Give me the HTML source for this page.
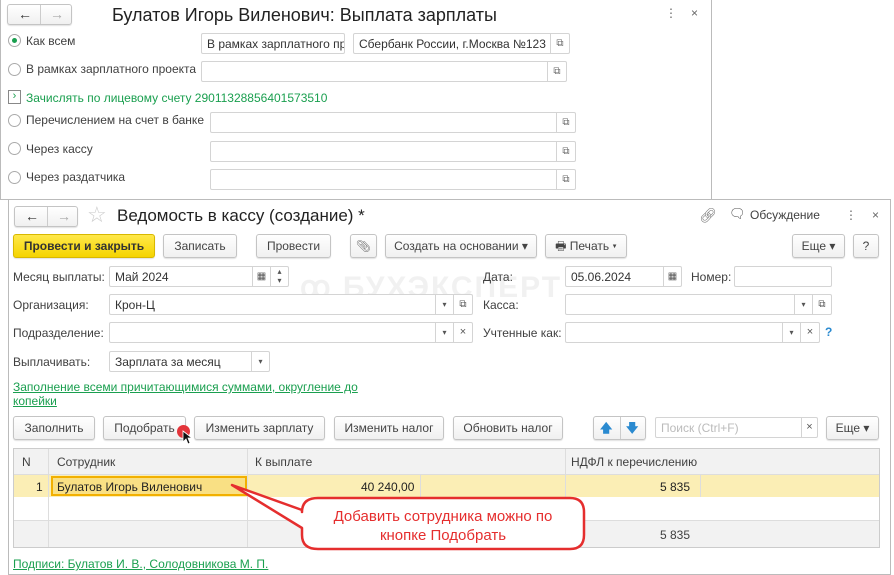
<!DOCTYPE html>
<html><head><meta charset="utf-8"><style>
*{box-sizing:border-box;margin:0;padding:0}
body{width:894px;height:575px;background:#fff;font-family:"Liberation Sans",sans-serif;font-size:12px;color:#404040;position:relative;overflow:hidden}
.a{position:absolute}
.f{position:absolute;border:1px solid #d4d4d4;border-radius:2px;background:#fff;height:21px;padding:3px 5px;white-space:nowrap;overflow:hidden;color:#333}
.b{position:absolute;border:1px solid #c4c4c4;border-radius:3px;background:linear-gradient(#fff,#f0f0f0);height:24px;text-align:center;line-height:22px;color:#444;box-shadow:0 1px 1px rgba(0,0,0,.12)}
.r{position:absolute;width:13px;height:13px;border:1px solid #aaa;border-radius:50%;background:#fff}
.cp{position:absolute;width:19px;height:21px;border-left:1px solid #d4d4d4;font-size:10px;color:#666;text-align:center;line-height:19px}
.dd{position:absolute;font-size:8px;color:#555;text-align:center;line-height:19px;border-left:1px solid #d4d4d4;width:18px;height:19px;top:0}
.l{position:absolute;white-space:nowrap}
.g{color:#1a9f4f}
.nav{position:absolute;font-size:14px;font-weight:bold;line-height:18px}
</style></head><body>
<!-- back window -->
<div class="a" style="left:0;top:0;width:712px;height:200px;border:1px solid #bbb;border-top:none"></div>
<div class="b" style="left:7px;top:4px;width:65px;height:21px;line-height:19px"><span class="nav" style="left:10px;color:#333">←</span><span style="position:absolute;left:32px;top:0;height:19px;border-left:1px solid #ccc"></span><span class="nav" style="left:42px;color:#aaa">→</span></div>
<div class="l" style="left:112px;top:5px;font-size:18px;color:#222">Булатов Игорь Виленович: Выплата зарплаты</div>
<div class="l" style="left:665px;top:6px;color:#666">⋮</div><div class="l" style="left:691px;top:6px;color:#666">×</div>
<div class="r" style="left:8px;top:34px"><div style="width:5px;height:5px;background:#1a9f4f;border-radius:50%;margin:3px"></div></div>
<div class="l" style="left:26px;top:34px">Как всем</div>
<div class="f" style="left:201px;top:33px;width:144px">В рамках зарплатного про</div>
<div class="f" style="left:353px;top:33px;width:217px">Сбербанк России, г.Москва №123<div class="cp" style="right:0;top:0">⧉</div></div>
<div class="r" style="left:8px;top:63px"></div><div class="l" style="left:26px;top:62px">В рамках зарплатного проекта</div>
<div class="f" style="left:201px;top:61px;width:366px"><div class="cp" style="right:0;top:0">⧉</div></div>
<div class="a" style="left:8px;top:90px;width:13px;height:14px;border:1px solid #888;color:#1a9f4f;font-size:11px;line-height:11px;text-align:center">›</div>
<div class="l g" style="left:26px;top:91px">Зачислять по лицевому счету 29011328856401573510</div>
<div class="r" style="left:8px;top:114px"></div><div class="l" style="left:26px;top:113px">Перечислением на счет в банке</div>
<div class="f" style="left:210px;top:112px;width:366px"><div class="cp" style="right:0;top:0">⧉</div></div>
<div class="r" style="left:8px;top:142px"></div><div class="l" style="left:26px;top:142px">Через кассу</div>
<div class="f" style="left:210px;top:141px;width:366px"><div class="cp" style="right:0;top:0">⧉</div></div>
<div class="r" style="left:8px;top:171px"></div><div class="l" style="left:26px;top:170px">Через раздатчика</div>
<div class="f" style="left:210px;top:169px;width:366px"><div class="cp" style="right:0;top:0">⧉</div></div>

<!-- front window -->
<div class="a" style="left:8px;top:199px;width:883px;height:376px;border:1px solid #bbb;background:#fff"></div>
<div class="l" style="left:300px;top:270px;font-size:30px;font-weight:bold;color:#f1f1f1;letter-spacing:2px">ꝏ БУХЭКСПЕРТ</div>
<div class="b" style="left:14px;top:206px;width:64px;height:21px;line-height:19px"><span class="nav" style="left:10px;color:#333">←</span><span style="position:absolute;left:32px;top:0;height:19px;border-left:1px solid #ccc"></span><span class="nav" style="left:42px;color:#aaa">→</span></div>
<div class="l" style="left:87px;top:202px;font-size:22px;color:#ccc">☆</div>
<div class="l" style="left:117px;top:206px;font-size:17px;color:#222">Ведомость в кассу (создание) *</div>
<div class="l" style="left:699px;top:207px;font-size:14px;color:#777">🔗︎</div>
<div class="l" style="left:729px;top:206px;font-size:13px;color:#555">🗨︎</div>
<div class="l" style="left:750px;top:208px">Обсуждение</div>
<div class="l" style="left:845px;top:208px;color:#666">⋮</div><div class="l" style="left:872px;top:208px;color:#666">×</div>

<div class="b" style="left:13px;top:234px;width:142px;background:linear-gradient(#ffe84a,#f5d400);border-color:#d8b800;font-weight:bold;color:#333">Провести и закрыть</div>
<div class="b" style="left:163px;top:234px;width:74px">Записать</div>
<div class="b" style="left:256px;top:234px;width:75px">Провести</div>
<div class="b" style="left:350px;top:234px;width:27px;color:#777">📎︎</div>
<div class="b" style="left:385px;top:234px;width:152px">Создать на основании ▾</div>
<div class="b" style="left:545px;top:234px;width:82px">🖶︎ Печать ▾</div>
<div class="b" style="left:792px;top:234px;width:53px">Еще ▾</div>
<div class="b" style="left:853px;top:234px;width:26px">?</div>

<div class="l" style="left:13px;top:270px">Месяц выплаты:</div>
<div class="f" style="left:109px;top:266px;width:180px">Май 2024<div class="dd" style="right:18px;font-size:10px">▦</div><div class="dd" style="right:0;line-height:9px">▴<br>▾</div></div>
<div class="l" style="left:483px;top:270px">Дата:</div>
<div class="f" style="left:565px;top:266px;width:117px">05.06.2024<div class="dd" style="right:0;font-size:10px">▦</div></div>
<div class="l" style="left:691px;top:270px">Номер:</div>
<div class="f" style="left:734px;top:266px;width:98px"></div>

<div class="l" style="left:13px;top:298px">Организация:</div>
<div class="f" style="left:109px;top:294px;width:364px">Крон-Ц<div class="dd" style="right:19px">▾</div><div class="dd" style="right:0;width:19px;font-size:10px">⧉</div></div>
<div class="l" style="left:483px;top:298px">Касса:</div>
<div class="f" style="left:565px;top:294px;width:267px"><div class="dd" style="right:19px">▾</div><div class="dd" style="right:0;width:19px;font-size:10px">⧉</div></div>

<div class="l" style="left:13px;top:326px">Подразделение:</div>
<div class="f" style="left:109px;top:322px;width:364px"><div class="dd" style="right:19px">▾</div><div class="dd" style="right:0;width:19px;font-size:11px">×</div></div>
<div class="l" style="left:483px;top:326px">Учтенные как:</div>
<div class="f" style="left:565px;top:322px;width:255px"><div class="dd" style="right:19px">▾</div><div class="dd" style="right:0;width:19px;font-size:11px">×</div></div>
<div class="l" style="left:825px;top:325px;color:#2a8ad0;font-weight:bold">?</div>

<div class="l" style="left:13px;top:355px">Выплачивать:</div>
<div class="f" style="left:109px;top:351px;width:161px">Зарплата за месяц<div class="dd" style="right:0">▾</div></div>

<div class="l g" style="left:13px;top:380px;text-decoration:underline">Заполнение всеми причитающимися суммами, округление до</div>
<div class="l g" style="left:13px;top:394px;text-decoration:underline">копейки</div>

<div class="b" style="left:13px;top:416px;width:82px">Заполнить</div>
<div class="b" style="left:103px;top:416px;width:83px">Подобрать</div>
<div class="b" style="left:194px;top:416px;width:131px">Изменить зарплату</div>
<div class="b" style="left:334px;top:416px;width:110px">Изменить налог</div>
<div class="b" style="left:453px;top:416px;width:110px">Обновить налог</div>
<div class="b" style="left:593px;top:416px;width:53px;color:#2a8ad0;font-weight:bold"><span style="position:absolute;left:6px">🡅</span><span style="position:absolute;left:26px;top:0;height:22px;border-left:1px solid #ccc"></span><span style="position:absolute;left:32px">🡇</span></div>
<div class="f" style="left:655px;top:417px;width:163px;color:#bbb">Поиск (Ctrl+F)<div class="dd" style="right:0;width:16px;font-size:11px;color:#555">×</div></div>
<div class="b" style="left:826px;top:416px;width:53px">Еще ▾</div>
<div class="a" style="left:177px;top:425px;width:13px;height:13px;border-radius:50%;background:#e3343a"></div>
<svg class="a" style="left:182px;top:430px" width="12" height="16"><path d="M1 1 L1 12 L4 9 L6 14 L8 13 L6 8 L10 8 Z" fill="#111" stroke="#fff" stroke-width="0.8"/></svg>

<!-- table -->
<div class="a" style="left:13px;top:448px;width:867px;height:100px;border:1px solid #ccc;background:#fff"></div>
<div class="a" style="left:14px;top:449px;width:865px;height:26px;background:#f2f2f2;border-bottom:1px solid #ddd"></div>
<div class="a" style="left:14px;top:475px;width:865px;height:22px;background:#fbeeb5"></div>
<div class="a" style="left:14px;top:520px;width:865px;height:27px;background:#f2f2f2;border-top:1px solid #ddd"></div>
<div class="a" style="left:48px;top:449px;height:98px;border-left:1px solid #ddd"></div>
<div class="a" style="left:247px;top:449px;height:98px;border-left:1px solid #ddd"></div>
<div class="a" style="left:565px;top:449px;height:98px;border-left:1px solid #ddd"></div>
<div class="a" style="left:420px;top:475px;height:22px;border-left:1px solid #ddd"></div>
<div class="a" style="left:700px;top:475px;height:22px;border-left:1px solid #ddd"></div>
<div class="l" style="left:22px;top:455px">N</div>
<div class="l" style="left:57px;top:455px">Сотрудник</div>
<div class="l" style="left:255px;top:455px">К выплате</div>
<div class="l" style="left:571px;top:455px">НДФЛ к перечислению</div>
<div class="l" style="left:36px;top:480px;color:#222">1</div>
<div class="a" style="left:51px;top:476px;width:196px;height:20px;background:#f9e084;border:2px solid #f2b000"></div>
<div class="l" style="left:57px;top:480px;color:#222">Булатов Игорь Виленович</div>
<div class="l" style="left:361px;top:480px;color:#222">40 240,00</div>
<div class="l" style="left:660px;top:480px;color:#222">5 835</div>
<div class="l" style="left:660px;top:528px">5 835</div>

<!-- callout -->
<svg class="a" style="left:0;top:0" width="894" height="575">
<path d="M318 498 H570 Q584 498 584 512 V535 Q584 549 570 549 H318 Q302 549 302 535 V528 L232 485 L302 510 V512 Q302 498 318 498 Z" fill="#fff" stroke="#e52e2e" stroke-width="2.5" stroke-linejoin="round"/>
</svg>
<div class="l" style="left:302px;top:507px;width:282px;text-align:center;color:#e52e2e;font-size:15px;line-height:19px;white-space:normal">Добавить сотрудника можно по<br>кнопке Подобрать</div>

<div class="l g" style="left:13px;top:557px;text-decoration:underline">Подписи: Булатов И. В., Солодовникова М. П.</div>
</body></html>
